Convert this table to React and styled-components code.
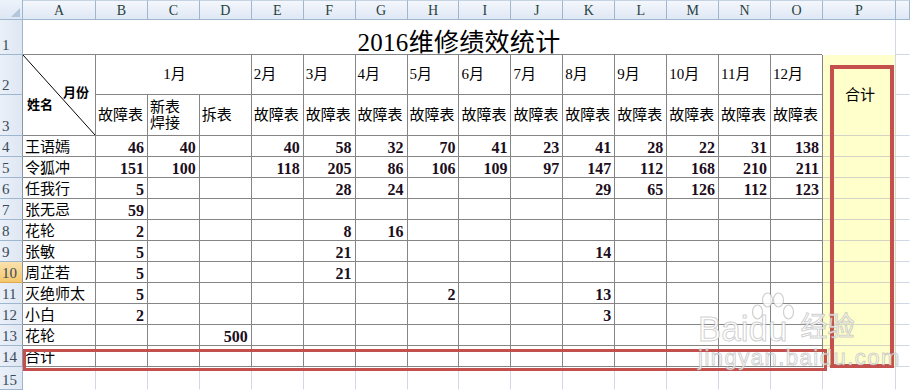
import React from 'react'
import styled, { createGlobalStyle } from 'styled-components'

const GlobalStyle = createGlobalStyle`
  html, body {
    margin: 0;
    padding: 0;
    background: #ffffff;
  }
  body {
    font-family: "Liberation Serif", "Noto Sans CJK SC", serif;
  }
`

const DARK = '#858585'
const HEAD_LINE = '#9eb6ce'
const GRID = '#d0d7e5'
const YELLOW_LINE = '#d3d4c4'

const Sheet = styled.div`
  position: relative;
  width: 910px;
  height: 390px;
  overflow: hidden;
  display: grid;
  grid-template-columns: 23px 73px repeat(14, 51.93px) 73px 1fr;
  grid-template-rows: 20px 35px 40px 41px repeat(11, 21px) 1fr;
  color: #000;
`

const Corner = styled.div`
  position: relative;
  background: linear-gradient(#eef3fa, #dce6f4);
  border-right: 1px solid ${HEAD_LINE};
  border-bottom: 1px solid ${HEAD_LINE};
  box-sizing: border-box;

  &::after {
    content: '';
    position: absolute;
    right: 2px;
    bottom: 2px;
    border-left: 9px solid transparent;
    border-bottom: 9px solid #b4c6dc;
  }
`

const ColHead = styled.div`
  box-sizing: border-box;
  display: flex;
  align-items: center;
  justify-content: center;
  background: linear-gradient(#f4f7fc, #dfe8f5);
  border-top: 1px solid #c5d3e3;
  border-right: 1px solid ${HEAD_LINE};
  border-bottom: 1px solid ${HEAD_LINE};
  font-family: "Liberation Serif", serif;
  font-size: 14px;
  color: #27413e;
  padding-top: 1px;
`

const RowHead = styled.div`
  box-sizing: border-box;
  display: flex;
  align-items: flex-end;
  padding: 0 0 1px 2px;
  background: ${(p) =>
    p.$active ? 'linear-gradient(#fbe2ad, #f3c76d)' : 'linear-gradient(to right, #eaf0f8, #dfe7f3)'};
  border-right: 1px solid ${(p) => (p.$dark ? '#8c96a3' : HEAD_LINE)};
  border-bottom: 1px solid ${(p) => (p.$active ? '#e1a94c' : HEAD_LINE)};
  font-family: "Liberation Serif", serif;
  font-size: 15px;
  line-height: 16px;
  color: #3a4a5a;
`

const lineColor = {
  dark: DARK,
  yellow: YELLOW_LINE,
  grid: GRID,
  none: 'transparent',
}

const Cell = styled.div`
  box-sizing: border-box;
  min-width: 0;
  display: flex;
  align-items: center;
  justify-content: ${(p) => p.$align || 'flex-start'};
  padding: ${(p) => (p.$data ? '3px' : '0')} ${(p) => (p.$num ? '3px' : '0')} 0
    ${(p) => (p.$num ? '0' : '2px')};
  grid-column: span ${(p) => p.$cs || 1};
  grid-row: span ${(p) => p.$rs || 1};
  background: ${(p) => p.$bg || 'transparent'};
  border-right: 1px solid ${(p) => lineColor[p.$right || 'dark']};
  border-bottom: 1px solid ${(p) => lineColor[p.$bottom || 'dark']};
  font-family: ${(p) =>
    p.$num ? '"Liberation Serif", serif' : '"Liberation Serif", "Noto Sans CJK SC", serif'};
  font-weight: ${(p) => (p.$num ? 700 : 400)};
  font-size: ${(p) => (p.$num ? '16px' : '15px')};
  line-height: 17px;
  color: ${(p) => (p.$num ? '#1c0e20' : '#000')};
  white-space: nowrap;
`

const TitleCell = styled.div`
  grid-column: span 16;
  box-sizing: border-box;
  display: flex;
  align-items: center;
  justify-content: center;
  padding-top: 4px;
  border-right: 1px solid ${GRID};
  background: linear-gradient(${DARK}, ${DARK}) left bottom / calc(100% - 73px) 1px no-repeat;
  font-family: "Liberation Serif", "Noto Sans CJK SC", serif;
  font-size: 25px;
  letter-spacing: 0.3px;
`

const DiagonalCell = styled.div`
  position: relative;
  grid-row: span 2;
  box-sizing: border-box;
  display: flex;
  flex-direction: column;
  justify-content: center;
  padding: 6px 6px 0 4px;
  border-right: 1px solid ${DARK};
  border-bottom: 1px solid ${DARK};
  font-family: "Noto Sans CJK SC", sans-serif;
  font-weight: 700;
  font-size: 13px;
  line-height: 12px;
`

const DiagonalLine = styled.svg`
  position: absolute;
  inset: 0;
  width: 100%;
  height: 100%;
`

const DiagLabel = styled.span`
  align-self: ${(p) => (p.$end ? 'flex-end' : 'flex-start')};
  position: relative;
  background: #fff;
`

const Wrapped = styled.span`
  white-space: normal;
  line-height: 16px;
  width: 32px;
`

const Mark = styled.div`
  position: absolute;
  box-sizing: border-box;
  border: ${(p) => p.$w}px solid #c4504d;
  pointer-events: none;
`

const Watermark = styled.div`
  position: absolute;
  left: 698px;
  top: 309px;
  display: flex;
  flex-direction: column;
  align-items: flex-start;
  pointer-events: none;
  font-family: "Liberation Sans", "Noto Sans CJK SC", sans-serif;
  color: rgba(255, 255, 255, 0.82);
  -webkit-text-stroke: 1px rgba(160, 160, 160, 0.5);
`

const MarkLine = styled.div`
  display: flex;
  align-items: flex-end;
  position: relative;
  font-size: ${(p) => p.$size}px;
  line-height: ${(p) => p.$line}px;
  letter-spacing: ${(p) => p.$spacing || 0}px;
`

const MarkCjk = styled.span`
  font-size: 27px;
  margin-left: 13px;
  margin-bottom: 2px;
`

const Paw = styled.svg`
  position: absolute;
  left: 53px;
  top: -18px;
`

const months = ['2月', '3月', '4月', '5月', '6月', '7月', '8月', '9月', '10月', '11月', '12月']
const cols = 'ABCDEFGHIJKLMNOP'.split('')

// B..O values, '' = empty
const rows = [
  ['王语嫣', [46, 40, '', 40, 58, 32, 70, 41, 23, 41, 28, 22, 31, 138]],
  ['令狐冲', [151, 100, '', 118, 205, 86, 106, 109, 97, 147, 112, 168, 210, 211]],
  ['任我行', [5, '', '', '', 28, 24, '', '', '', 29, 65, 126, 112, 123]],
  ['张无忌', [59, '', '', '', '', '', '', '', '', '', '', '', '', '']],
  ['花轮', [2, '', '', '', 8, 16, '', '', '', '', '', '', '', '']],
  ['张敏', [5, '', '', '', 21, '', '', '', '', 14, '', '', '', '']],
  ['周芷若', [5, '', '', '', 21, '', '', '', '', '', '', '', '', '']],
  ['灭绝师太', [5, '', '', '', '', '', 2, '', '', 13, '', '', '', '']],
  ['小白', [2, '', '', '', '', '', '', '', '', 3, '', '', '', '']],
  ['花轮', ['', '', 500, '', '', '', '', '', '', '', '', '', '', '']],
  ['合计', ['', '', '', '', '', '', '', '', '', '', '', '', '', '']],
]

const YELLOW = '#ffffcc'

export default function App() {
  return (
    <>
      <GlobalStyle />
      <Sheet>
        <Corner />
        {cols.map((c) => (
          <ColHead key={c}>{c}</ColHead>
        ))}
        <ColHead />

        <RowHead>1</RowHead>
        <TitleCell>2016维修绩效统计</TitleCell>
        <Cell $right="none" $bottom="grid" />

        <RowHead $dark>2</RowHead>
        <DiagonalCell>
          <DiagonalLine viewBox="0 0 73 81" preserveAspectRatio="none">
            <line x1="0" y1="0" x2="73" y2="81" stroke="#000" strokeWidth="1" />
          </DiagonalLine>
          <DiagLabel $end>月份</DiagLabel>
          <DiagLabel>姓名</DiagLabel>
        </DiagonalCell>
        <Cell $cs={3} $align="center">1月</Cell>
        {months.map((m) => (
          <Cell key={m}>{m}</Cell>
        ))}
        <Cell $rs={2} $align="center" $bg={YELLOW} $right="grid" $bottom="yellow">
          合计
        </Cell>
        <Cell $right="none" $bottom="grid" />

        <RowHead $dark>3</RowHead>
        <Cell>故障表</Cell>
        <Cell>
          <Wrapped>新表焊接</Wrapped>
        </Cell>
        <Cell>拆表</Cell>
        {months.map((m) => (
          <Cell key={m}>故障表</Cell>
        ))}
        <Cell $right="none" $bottom="grid" />

        {rows.map(([name, values], i) => (
          <React.Fragment key={i}>
            <RowHead $dark $active={i + 4 === 10}>
              {i + 4}
            </RowHead>
            <Cell $data>{name}</Cell>
            {values.map((v, j) => (
              <Cell key={j} $data $num $align="flex-end">
                {v}
              </Cell>
            ))}
            <Cell $bg={YELLOW} $right="grid" $bottom="yellow" />
            <Cell $right="none" $bottom="grid" />
          </React.Fragment>
        ))}

        <RowHead>15</RowHead>
        {cols.map((c) => (
          <Cell key={c} $right="grid" $bottom="none" />
        ))}
        <Cell $right="none" $bottom="none" />

        <Mark $w={4} style={{ left: 830, top: 65, width: 64, height: 303 }} />
        <Mark $w={3} style={{ left: 23, top: 349, width: 804, height: 22 }} />

        <Watermark>
          <MarkLine $size={35} $line={36}>
            <span>Baidu</span>
            <MarkCjk>经验</MarkCjk>
            <Paw width="44" height="36" viewBox="0 0 44 36">
              <g fill="rgba(255,255,255,0.8)" stroke="rgba(160,160,160,0.5)" strokeWidth="1.2">
                <ellipse cx="6.5" cy="21" rx="5" ry="7" />
                <ellipse cx="16.5" cy="9" rx="5" ry="7" />
                <ellipse cx="27.5" cy="9" rx="5" ry="7" />
                <ellipse cx="37.5" cy="21" rx="5" ry="7" />
              </g>
            </Paw>
          </MarkLine>
          <MarkLine $size={22} $line={22} $spacing={1.5}>
            jingyan.baidu.com
          </MarkLine>
        </Watermark>
      </Sheet>
    </>
  )
}
